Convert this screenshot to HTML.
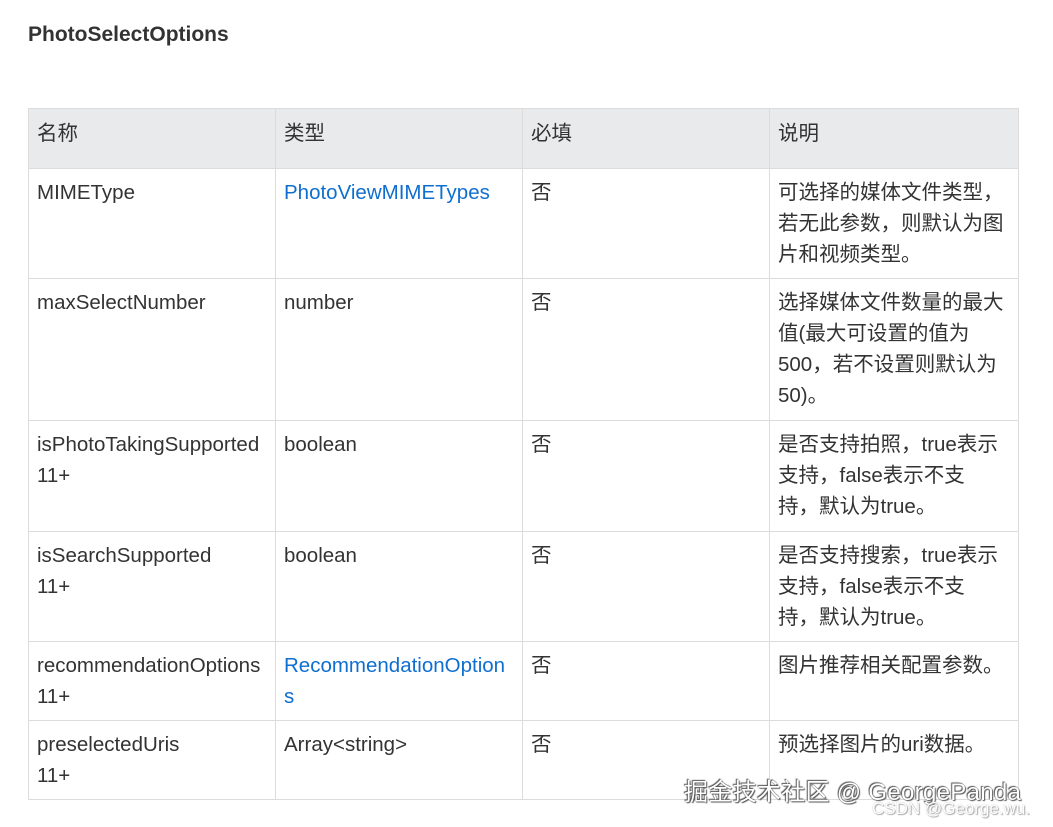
<!DOCTYPE html>
<html><head><meta charset="utf-8"><style>
body{margin:0;background:#fff;width:1053px;height:827px;overflow:hidden;position:relative;font-family:"Liberation Sans","Noto Sans CJK SC",sans-serif;color:#333}
h4{position:absolute;left:28px;top:23px;margin:0;font-size:21px;font-weight:bold;color:#333}
table{position:absolute;left:28px;top:108px;border-collapse:collapse;table-layout:fixed;width:990px}
td,th{border:1px solid #dcdcdc;vertical-align:top;text-align:left;font-weight:normal;font-size:20.5px;line-height:31px;padding:8px 8px 8px 8px;overflow:hidden;white-space:nowrap}
th{background:#e9eaec;padding:9px 8px 19px 8px}
a{color:#0f6fd0;text-decoration:none}
.wm1{position:absolute;left:684px;top:772px;font-size:24px;color:#fff;text-shadow:0 0 1px #444,1px 1px 1px #555,-1px -1px 1px #555;letter-spacing:0.3px}
.wm2{position:absolute;left:872px;top:799px;font-size:17px;color:#fff;text-shadow:0 0 1px #999,1px 1px 1px #aaa}
</style></head><body>
<h4>PhotoSelectOptions</h4>
<table>
<colgroup><col style="width:247px"><col style="width:247px"><col style="width:247px"><col style="width:249px"></colgroup>
<tr style="height:60px"><th>名称</th><th>类型</th><th>必填</th><th>说明</th></tr>
<tr style="height:110px"><td>MIMEType</td><td><a>PhotoViewMIMETypes</a></td><td>否</td><td>可选择的媒体文件类型，<br>若无此参数，则默认为图<br>片和视频类型。</td></tr>
<tr style="height:142px"><td>maxSelectNumber</td><td>number</td><td>否</td><td>选择媒体文件数量的最大<br>值(最大可设置的值为<br>500，若不设置则默认为<br>50)。</td></tr>
<tr style="height:111px"><td>isPhotoTakingSupported<br>11+</td><td>boolean</td><td>否</td><td>是否支持拍照，true表示<br>支持，false表示不支<br>持，默认为true。</td></tr>
<tr style="height:110px"><td>isSearchSupported<br>11+</td><td>boolean</td><td>否</td><td>是否支持搜索，true表示<br>支持，false表示不支<br>持，默认为true。</td></tr>
<tr style="height:79px"><td>recommendationOptions<br>11+</td><td><a>RecommendationOption<br>s</a></td><td>否</td><td>图片推荐相关配置参数。</td></tr>
<tr style="height:79px"><td>preselectedUris<br>11+</td><td>Array&lt;string&gt;</td><td>否</td><td>预选择图片的uri数据。</td></tr>
</table>
<div class="wm1">掘金技术社区 @ GeorgePanda</div>
<div class="wm2">CSDN @George.wu.</div>
</body></html>
